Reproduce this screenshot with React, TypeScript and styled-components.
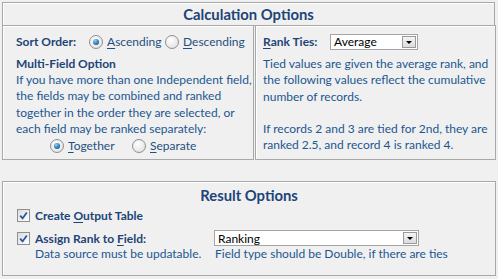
import React from "react";
import styled, { createGlobalStyle } from "styled-components";

const GlobalStyle = createGlobalStyle`
  html, body {
    margin: 0;
    padding: 0;
    background: #f0f0f0;
  }
  body {
    font-family: Lato, "Open Sans", sans-serif;
    font-size: 12px;
    color: #1c5791;
    white-space: nowrap;
  }
`;

const Page = styled.div`
  width: 498px;
  height: 279px;
  padding: 2px 2px 0 2px;
  box-sizing: border-box;
  display: flex;
  flex-direction: column;
`;

const Frame = styled.div`
  border: 1px solid #a8a8a8;
  box-shadow: inset 1px 1px 0 #ffffff;
`;

const TitleBar = styled(Frame)`
  height: 24px;
  display: flex;
  align-items: center;
  justify-content: center;
  width: 493px;
  box-sizing: border-box;
`;

const Title = styled.div`
  font-weight: 700;
  font-size: 14.8px;
  color: #1d4477;
`;

const Columns = styled.div`
  display: flex;
  gap: 1px;
  margin-top: -1px;
`;

const Box = styled(Frame)<{ $w: number }>`
  width: ${(p) => p.$w}px;
  height: 135px;
  box-sizing: border-box;
  padding: ${(p) => (p.$w > 245 ? "7px 0 0 13px" : "7px 0 0 7px")};
`;

const Row = styled.div`
  display: flex;
  align-items: center;
  height: 17px;
`;

const Label = styled.span<{ $w?: number }>`
  font-weight: 700;
  color: #1d4477;
  width: ${(p) => (p.$w ? `${p.$w}px` : "auto")};
  flex-shrink: 0;
`;

const Heading = styled.div`
  font-weight: 700;
  color: #1d4477;
  margin-top: 6px;
  line-height: 16px;
`;

const Text = styled.div<{ $gap?: number }>`
  line-height: 16.3px;
  margin-top: ${(p) => p.$gap ?? 0}px;
`;

const Option = styled.label<{ $w?: number }>`
  display: inline-flex;
  align-items: center;
  gap: 4px;
  width: ${(p) => (p.$w ? `${p.$w}px` : "auto")};
  color: #1f4f80;
`;

const Key = styled.span`
  text-decoration: underline;
  text-underline-offset: 2px;
`;

const RadioDot = styled.span<{ $on?: boolean }>`
  width: 12px;
  height: 12px;
  border-radius: 50%;
  border: 1px solid #8e8f8f;
  background: radial-gradient(circle at 40% 35%, #ffffff 0%, #e6e6e6 70%, #d2d2d2 100%);
  display: inline-flex;
  align-items: center;
  justify-content: center;
  flex-shrink: 0;
  &::after {
    content: "";
    display: ${(p) => (p.$on ? "block" : "none")};
    width: 6px;
    height: 6px;
    border-radius: 50%;
    background: radial-gradient(circle at 35% 30%, #8fd3f5 0%, #2a7fb8 55%, #0c3f6b 100%);
  }
`;

const Radio: React.FC<{ on?: boolean; k: string; rest: string; w?: number }> = ({ on, k, rest, w }) => (
  <Option $w={w}>
    <RadioDot $on={on} />
    <span>
      <Key>{k}</Key>
      {rest}
    </span>
  </Option>
);

const RadioRow = styled.div`
  display: flex;
  align-items: center;
  height: 17px;
  padding-left: 34px;
  margin-top: 0;
`;

const Select = styled.div<{ $w: number }>`
  width: ${(p) => p.$w}px;
  height: 16px;
  box-sizing: border-box;
  border: 1px solid #a5a5a5;
  background: #ffffff;
  display: flex;
  align-items: center;
  justify-content: space-between;
  padding-left: 3px;
  color: #000000;
`;

const SelectBtn = styled.span`
  width: 14px;
  height: 12px;
  margin-right: 1px;
  border: 1px solid #9a9a9a;
  box-sizing: border-box;
  background: linear-gradient(#f4f4f4, #dcdcdc);
  display: flex;
  align-items: center;
  justify-content: center;
  &::after {
    content: "";
    border-left: 3px solid transparent;
    border-right: 3px solid transparent;
    border-top: 3px solid #000;
    margin-top: 1px;
  }
`;

const ResultPanel = styled(Frame)`
  margin-top: 21px;
  width: 494px;
  height: 95px;
  box-sizing: border-box;
  padding-top: 3px;
`;

const ResultTitle = styled(Title)`
  text-align: center;
  line-height: 20px;
`;

const ResultRow = styled.div<{ $top: number }>`
  display: flex;
  align-items: center;
  height: 16px;
  margin-top: ${(p) => p.$top}px;
  padding-left: 14px;
`;

const Check = styled.span`
  width: 13px;
  height: 13px;
  box-sizing: border-box;
  border: 1px solid #8e8f8f;
  background: linear-gradient(135deg, #dcdcdc, #ffffff);
  display: inline-flex;
  align-items: center;
  justify-content: center;
  margin-right: 5px;
  flex-shrink: 0;
`;

const CheckBox: React.FC = () => (
  <Check>
    <svg width="9" height="9" viewBox="0 0 9 9">
      <path d="M1.2 4.6 L3.6 7.4 L7.8 1.4" fill="none" stroke="#2b55a3" strokeWidth="1.8" />
    </svg>
  </Check>
);

const Note = styled.div`
  display: flex;
  padding-left: 32px;
  line-height: 16px;
`;

const NoteLeft = styled.span`
  width: 180px;
`;

const App: React.FC = () => (
  <Page>
    <GlobalStyle />
    <TitleBar>
      <Title>Calculation Options</Title>
    </TitleBar>
    <Columns>
      <Box $w={252}>
        <Row>
          <Label $w={73}>Sort Order:</Label>
          <Radio on k="A" rest="scending" w={76} />
          <Radio k="D" rest="escending" />
        </Row>
        <Heading>Multi-Field Option</Heading>
        <Text>
          If you have more than one Independent field,
          <br />
          the fields may be combined and ranked
          <br />
          together in the order they are selected, or
          <br />
          each field may be ranked separately:
        </Text>
        <RadioRow>
          <Radio on k="T" rest="ogether" w={82} />
          <Radio k="S" rest="eparate" />
        </RadioRow>
      </Box>
      <Box $w={241}>
        <Row>
          <Label $w={67}>
            <Key>R</Key>ank Ties:
          </Label>
          <Select $w={88}>
            Average
            <SelectBtn />
          </Select>
        </Row>
        <Text $gap={6}>
          Tied values are given the average rank, and
          <br />
          the following values reflect the cumulative
          <br />
          number of records.
        </Text>
        <Text $gap={16}>
          If records 2 and 3 are tied for 2nd, they are
          <br />
          ranked 2.5, and record 4 is ranked 4.
        </Text>
      </Box>
    </Columns>
    <ResultPanel>
      <ResultTitle>Result Options</ResultTitle>
      <ResultRow $top={2}>
        <CheckBox />
        <Label>
          Create <Key>O</Key>utput Table
        </Label>
      </ResultRow>
      <ResultRow $top={7}>
        <CheckBox />
        <Label $w={179}>
          Assign Rank to <Key>F</Key>ield:
        </Label>
        <Select $w={205}>
          Ranking
          <SelectBtn />
        </Select>
      </ResultRow>
      <Note>
        <NoteLeft>Data source must be updatable.</NoteLeft>
        <span>Field type should be Double, if there are ties</span>
      </Note>
    </ResultPanel>
  </Page>
);

export default App;
